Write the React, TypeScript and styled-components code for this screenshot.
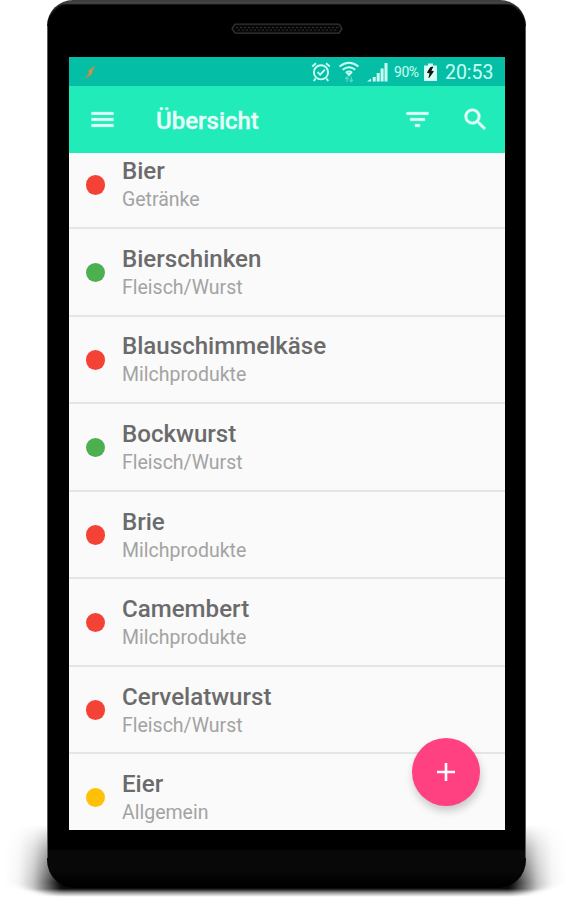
import React from "react";
import styled, { createGlobalStyle } from "styled-components";

const GlobalStyle = createGlobalStyle`
  * { box-sizing: border-box; }
  html, body { margin: 0; background: #fff; overflow: hidden; }
  body { font-family: Roboto, sans-serif; }
`;

const Stage = styled.main`
  position: relative;
  width: 571px;
  height: 900px;
  padding: 0 45px 0 47px;
  background: #fff;
  overflow: hidden;
`;

const GroundShadow = styled.svg`
  position: absolute;
  left: 0;
  top: 820px;
  width: 571px;
  height: 80px;
`;

const Phone = styled.div`
  position: relative;
  display: flex;
  flex-direction: column;
  width: 479px;
  height: 888px;
  padding: 0 21.5px 0 22px;
  border-radius: 26px 26px 28px 28px;
  background:
    linear-gradient(#5c5c5c, #5c5c5c) 0 26px / 1px 832px no-repeat,
    linear-gradient(#5c5c5c, #5c5c5c) 100% 26px / 1px 832px no-repeat,
    linear-gradient(#4a4a4a 0 3px, #303030 4px, #000 5px 849px, #080808 851px 870px, #000 886px);
  box-shadow: inset 0 3px 2px -1px #3c3c3c;
`;

const Forehead = styled.div`
  display: flex;
  justify-content: center;
  flex: 0 0 57px;
  padding: 23px 0 0 0;
`;

const Speaker = styled.svg`
  width: 112px;
  height: 12px;
`;

const Screen = styled.section`
  position: relative;
  display: flex;
  flex-direction: column;
  flex: 0 0 773px;
  background: #fafafa;
  overflow: hidden;
`;

const StatusBar = styled.div`
  display: flex;
  align-items: center;
  flex: 0 0 28.5px;
  padding: 2px 11px 0 15px;
  background: #04bfa5;
  color: #c9fff3;
`;

const StatusIcon = styled.svg<{ $w: number; $gap?: number }>`
  width: ${(p) => p.$w}px;
  height: 22px;
  margin-right: ${(p) => p.$gap ?? 0}px;
  flex: none;
`;

const Spacer = styled.div`
  flex: 1;
`;

const Percent = styled.span`
  width: 27px;
  margin-right: 3px;
  font-size: 14px;
  line-height: 22px;
  letter-spacing: -0.4px;
  white-space: nowrap;
`;

const Clock = styled.span`
  padding-top: 2px;
  font-size: 19.5px;
  line-height: 22px;
  white-space: nowrap;
`;

const Toolbar = styled.header`
  display: flex;
  align-items: center;
  flex: 0 0 67.5px;
  padding: 0 15px 0 19px;
  background: #20ebb9;
  color: #e8fff9;
`;

const Title = styled.h1`
  margin: 3px 0 0 39px;
  flex: 1;
  font-size: 24px;
  line-height: 30px;
  font-weight: 500;
  -webkit-text-stroke: 0.3px currentColor;
`;

const ToolIcon = styled.svg<{ $gap?: number }>`
  width: 29px;
  height: 29px;
  flex: none;
  margin-right: ${(p) => p.$gap ?? 0}px;
  fill: currentColor;
  stroke: currentColor;
  stroke-width: 0.4px;
`;

const List = styled.ul`
  display: flex;
  flex-direction: column;
  flex: 1;
  min-height: 0;
  margin: 0;
  padding: 0;
  list-style: none;
  overflow: hidden;

  & > li:first-child { margin-top: -11.5px; }
`;

const Row = styled.li`
  display: flex;
  align-items: center;
  flex: 0 0 87.57px;
  padding-left: 16.5px;
  border-bottom: 2px solid #e5e5e5;
`;

const Dot = styled.span<{ $color: string }>`
  width: 19.5px;
  height: 19.5px;
  margin: 1px 17px 0 0;
  border-radius: 50%;
  background: ${(p) => p.$color};
`;

const Labels = styled.div`
  display: flex;
  flex-direction: column;
  padding-top: 3px;
`;

const Name = styled.span`
  font-size: 24.1px;
  line-height: 29px;
  font-weight: 500;
  color: #6b6b6b;
`;

const Category = styled.span`
  font-size: 19.5px;
  line-height: 28px;
  color: #a3a3a3;
`;

const AddButton = styled.button`
  position: absolute;
  right: 24.5px;
  bottom: 24.5px;
  display: flex;
  align-items: center;
  justify-content: center;
  width: 68px;
  height: 68px;
  padding: 0;
  border: 0;
  border-radius: 50%;
  background: #ff4081;
  box-shadow: 1px 5px 8px rgba(0, 0, 0, 0.2);
`;

const RED = "#f44336";
const GREEN = "#4caf50";
const AMBER = "#ffc107";

const items = [
  { name: "Bier", category: "Getränke", color: RED },
  { name: "Bierschinken", category: "Fleisch/Wurst", color: GREEN },
  { name: "Blauschimmelkäse", category: "Milchprodukte", color: RED },
  { name: "Bockwurst", category: "Fleisch/Wurst", color: GREEN },
  { name: "Brie", category: "Milchprodukte", color: RED },
  { name: "Camembert", category: "Milchprodukte", color: RED },
  { name: "Cervelatwurst", category: "Fleisch/Wurst", color: RED },
  { name: "Eier", category: "Allgemein", color: AMBER },
];

function Status() {
  return (
    <StatusBar>
      <StatusIcon $w={13} viewBox="0 0 13 22">
        <path d="M11 5 4.5 9.5l.7 2.5L1 17.5 8 13l.3-3Z" fill="#c49a4e" stroke="#a58a55" strokeWidth=".8" />
      </StatusIcon>
      <Spacer />
      <StatusIcon $w={20} $gap={7} viewBox="0 0 20 22" fill="none" stroke="currentColor" strokeWidth="1.9">
        <circle cx="10" cy="11.3" r="7.1" />
        <path d="M1.2 5.5 5 2.3M15 2.3l3.8 3.2M4.5 17.5 2.8 20M15.5 17.5l1.7 2.5M6.5 11l2.7 2.7 4.7-5" />
      </StatusIcon>
      <StatusIcon $w={22} $gap={7} viewBox="0 0 22 22" fill="none" stroke="currentColor" strokeWidth="2">
        <path d="M1.5 5.5q9.5-7.5 19 0M4.7 8.7q6.3-5 12.6 0M7.8 11.7q3.2-2.5 6.4 0" />
        <path d="M8 12h6l-3 3.5Z" fill="currentColor" stroke="none" />
        <path d="M9 21v-4.5M7.3 18l1.7-2 1.7 2M13.3 15.5v5M11.6 18.7l1.7 2 1.7-2" strokeWidth="1.2" opacity=".4" />
      </StatusIcon>
      <StatusIcon $w={21} $gap={6} viewBox="0 0 21 22" fill="currentColor">
        <path d="M0 20.5 4 17.5v3ZM5.7 16h3v4.5h-3ZM9.7 12h3v8.5h-3ZM13.6 7.5h3v13h-3ZM17.5 2h3v18.5h-3Z" />
      </StatusIcon>
      <Percent>90%</Percent>
      <StatusIcon $w={13} $gap={8} viewBox="0 0 13 22">
        <path d="M4 2.5h5v2h4v15.5H0V4.5h4Z" fill="#d6fff6" />
        <path d="m6.5 6.5-3 5 2.7.5-1.2 4.5 4.3-6-2.6-.5L8.7 6Z" fill="#111" stroke="#111" />
      </StatusIcon>
      <Clock>20:53</Clock>
    </StatusBar>
  );
}

function Appbar() {
  return (
    <Toolbar>
      <ToolIcon viewBox="0 0 24 24">
        <path d="M3 18h18v-2H3v2zm0-5h18v-2H3v2zm0-7v2h18V6H3z" />
      </ToolIcon>
      <Title>Übersicht</Title>
      <ToolIcon $gap={29} viewBox="0 0 24 24">
        <path d="M10 18h4v-2h-4v2zM3 6v2h18V6H3zm3 7h12v-2H6v2z" />
      </ToolIcon>
      <ToolIcon viewBox="0 0 24 24">
        <path d="M15.5 14h-.79l-.28-.27A6.47 6.47 0 0 0 16 9.5 6.5 6.5 0 1 0 9.5 16c1.61 0 3.09-.59 4.23-1.57l.27.28v.79l5 4.99L20.49 19l-4.99-5zm-6 0a4.5 4.5 0 1 1 0-9 4.5 4.5 0 0 1 0 9z" />
      </ToolIcon>
    </Toolbar>
  );
}

export default function App() {
  return (
    <>
      <GlobalStyle />
      <Stage>
        <GroundShadow viewBox="0 0 571 80">
          <defs>
            <linearGradient id="spread" gradientUnits="userSpaceOnUse" x1="5" x2="566" y1="0" y2="0">
              <stop offset="0" stopOpacity="0" />
              <stop offset=".025" stopOpacity=".04" />
              <stop offset=".05" stopOpacity=".22" />
              <stop offset=".075" stopOpacity=".6" />
              <stop offset=".1" stopOpacity="1" />
              <stop offset=".9" stopOpacity="1" />
              <stop offset=".925" stopOpacity=".6" />
              <stop offset=".95" stopOpacity=".22" />
              <stop offset=".975" stopOpacity=".04" />
              <stop offset="1" stopOpacity="0" />
            </linearGradient>
            <linearGradient id="fade" x2="0" y2="1">
              <stop offset=".06" stopColor="#fff" stopOpacity="0" />
              <stop offset=".35" stopColor="#fff" stopOpacity=".5" />
              <stop offset=".65" stopColor="#fff" stopOpacity=".85" />
              <stop offset=".78" stopColor="#fff" />
              <stop offset=".86" stopColor="#fff" stopOpacity=".95" />
              <stop offset=".91" stopColor="#fff" stopOpacity=".4" />
              <stop offset=".96" stopColor="#fff" stopOpacity="0" />
            </linearGradient>
            <mask id="floor">
              <rect width="571" height="80" fill="url(#fade)" />
            </mask>
            <filter id="soften" filterUnits="userSpaceOnUse" x="-20" y="-20" width="611" height="120">
              <feGaussianBlur stdDeviation="2.2" />
            </filter>
          </defs>
          <g mask="url(#floor)">
            <path d="M0 0H571V62Q530 72 485 90H86Q41 72 0 62Z" fill="url(#spread)" filter="url(#soften)" />
          </g>
        </GroundShadow>
        <Phone>
          <Forehead>
            <Speaker viewBox="0 0 112 12">
              <path d="M4 1.2h104l3 4.5-3 4.5H4L1 5.7Z" fill="#080808" stroke="#343434" strokeWidth="1.3" strokeLinejoin="round" />
              <path d="M5 4.5h102M7 7h98" stroke="#303030" strokeWidth="1.2" strokeDasharray="2 2" />
            </Speaker>
          </Forehead>
          <Screen>
            <Status />
            <Appbar />
            <List>
              {items.map((item) => (
                <Row key={item.name}>
                  <Dot $color={item.color} />
                  <Labels>
                    <Name>{item.name}</Name>
                    <Category>{item.category}</Category>
                  </Labels>
                </Row>
              ))}
            </List>
            <AddButton aria-label="Hinzufügen">
              <svg width="18" height="18" viewBox="0 0 18 18">
                <path d="M9 0v18M0 9h18" stroke="#fff" strokeWidth="2.6" />
              </svg>
            </AddButton>
          </Screen>
        </Phone>
      </Stage>
    </>
  );
}
